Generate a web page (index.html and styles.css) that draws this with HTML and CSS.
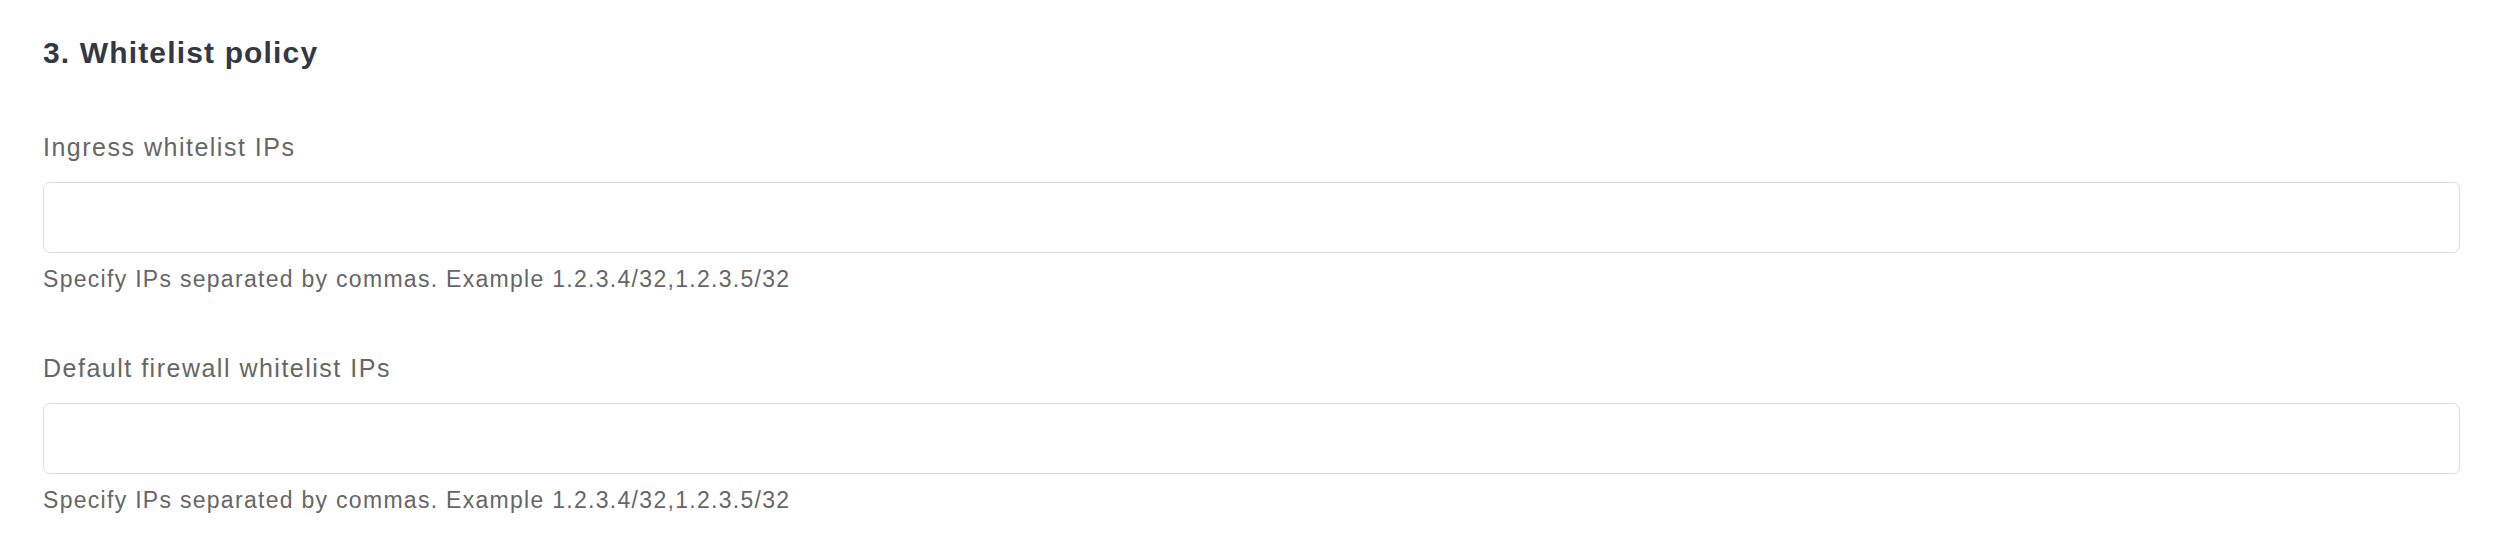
FILE: index.html
```html
<!DOCTYPE html>
<html lang="en">
<head>
<meta charset="utf-8">
<title>Whitelist policy</title>
<link rel="stylesheet" href="styles.css">
</head>
<body>
<section class="section">
  <h2 class="section-title">3. Whitelist policy</h2>
  <div class="field field-first">
    <label class="field-label" for="ingress">Ingress whitelist IPs</label>
    <input class="field-input" id="ingress" type="text">
    <p class="field-help">Specify IPs separated by commas. Example 1.2.3.4/32,1.2.3.5/32</p>
  </div>
  <div class="field">
    <label class="field-label" for="firewall">Default firewall whitelist IPs</label>
    <input class="field-input" id="firewall" type="text">
    <p class="field-help">Specify IPs separated by commas. Example 1.2.3.4/32,1.2.3.5/32</p>
  </div>
</section>
</body>
</html>
```
FILE: styles.css
```css
html, body {
  margin: 0;
  padding: 0;
  background: #ffffff;
}

body {
  font-family: "Liberation Sans", Arial, Helvetica, sans-serif;
}

.section {
  padding: 35px 44px 0 43px;
  display: flex;
  flex-direction: column;
}

.section-title {
  margin: 0;
  font-size: 30px;
  line-height: 36px;
  font-weight: 700;
  letter-spacing: 1.15px;
  color: #323844;
}

.field {
  display: flex;
  flex-direction: column;
  margin-top: 60px;
}

.field-first {
  margin-top: 61px;
}

.field-label {
  font-size: 25px;
  line-height: 30px;
  letter-spacing: 1.5px;
  color: #666666;
}

.field-input {
  box-sizing: border-box;
  margin: 20px 0 0 0;
  width: 100%;
  height: 71px;
  border: 1.5px solid #dddddd;
  border-radius: 7px;
  background: #ffffff;
  outline: none;
  padding: 0 16px;
  font: inherit;
}

.field-help {
  margin: 12px 0 0 0;
  font-size: 23px;
  line-height: 28px;
  letter-spacing: 1.29px;
  color: #666666;
}
```
